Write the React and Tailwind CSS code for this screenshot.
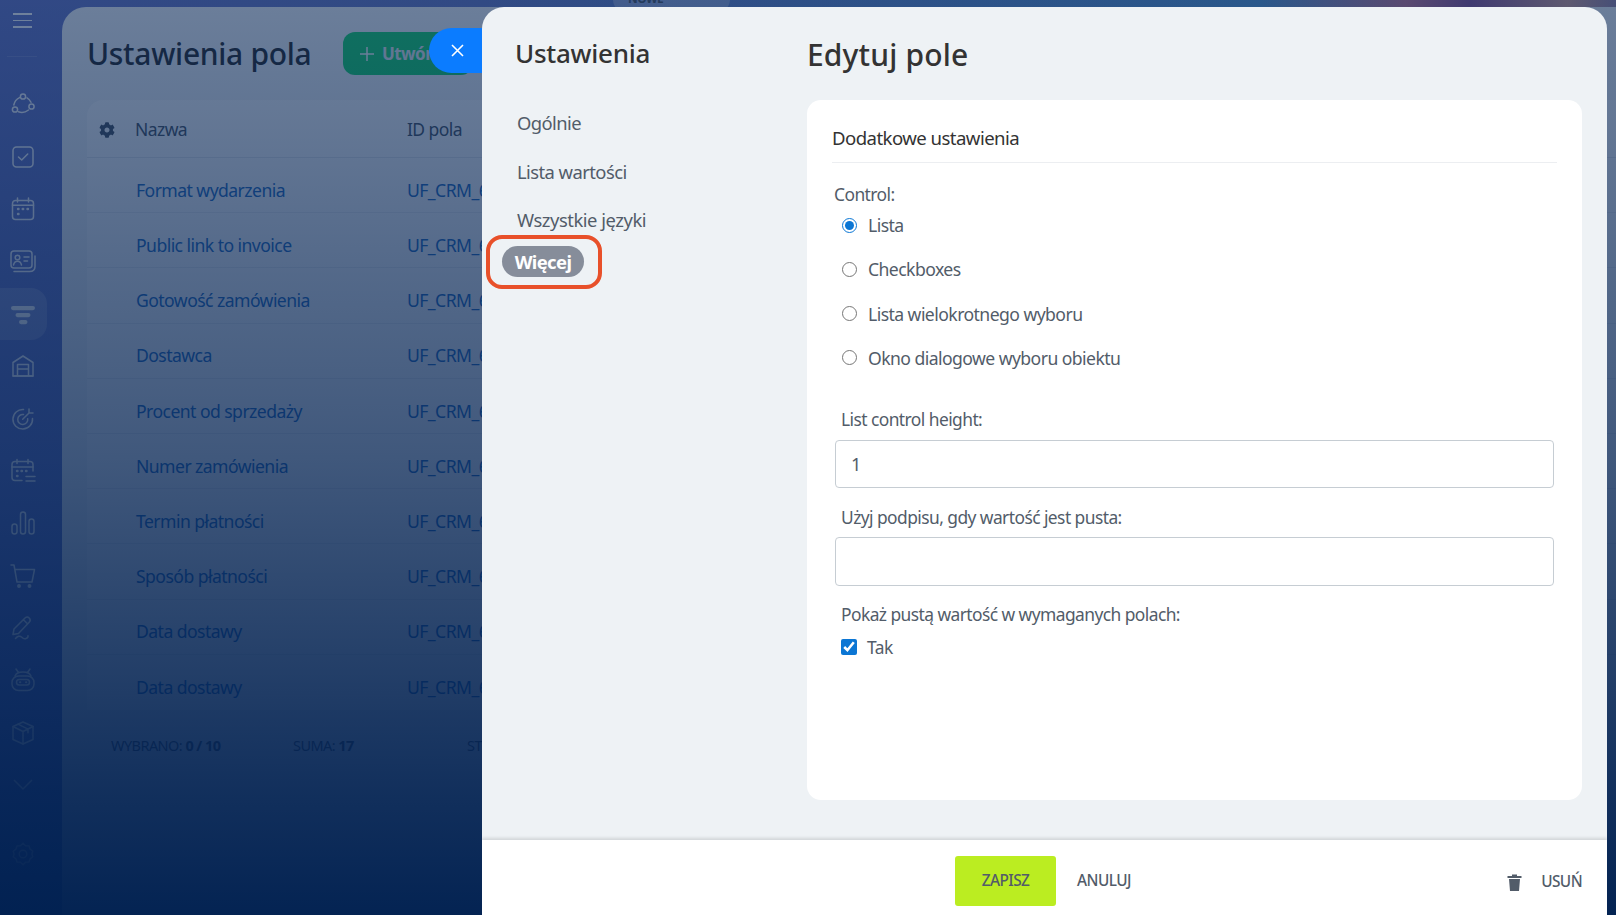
import React from "react";
import { FaCog } from "react-icons/fa";

const I = ({ children }) => (
  <svg width="26" height="26" viewBox="0 0 26 26" fill="none" stroke="white" strokeWidth="1.5" strokeLinecap="round" strokeLinejoin="round">
    {children}
  </svg>
);

const icons = [
  <I key="a"><circle cx="13" cy="5.5" r="2.6" /><circle cx="5" cy="18.5" r="2.6" /><circle cx="21.5" cy="15.5" r="2.6" /><path d="M9.5 6.600C6.400 8.200 4.400 10.800 3.800 14M21 11.200C20.200 9.400 19 8 17 6.800M8.500 20.800c3.500 1.200 6.800.6 10-1.800" /></I>,
  <I key="b"><rect x="3" y="3" width="20" height="20" rx="3.5" /><path d="M8.5 13l3.2 3 6-6" /></I>,
  <I key="c"><rect x="2.5" y="4.5" width="21" height="19" rx="3" /><path d="M7.5 2v4M18.5 2v4M2.5 9.2h21" /><path d="M8 13h.5M12.7 13h.5M17.5 13h.5M8 18h.5" strokeWidth="2.4" /></I>,
  <I key="d"><rect x="1" y="3" width="21" height="17" rx="3" /><path d="M4 23.5h15.5c3 0 5.5-1.5 5.5-5V8" /><circle cx="7.5" cy="9.5" r="2.3" /><path d="M3.5 17c.6-2.6 2-3.7 4-3.7s3.4 1.1 4 3.7M14 9h5M14 13h3.5" /></I>,
  <svg key="e" width="26" height="26" viewBox="0 0 26 26" fill="white"><rect x="1" y="5" width="24" height="4.2" rx="2.1" /><rect x="5.5" y="12" width="15" height="4.2" rx="2.1" /><rect x="9" y="19" width="8.5" height="4.2" rx="2.1" /></svg>,
  <I key="f"><path d="M3 23V9.5L13 3l10 6.5V23z" /><path d="M7.5 23V11.5h11V23M7.5 16h11M3 23h20" /></I>,
  <I key="g"><path d="M13.5 3.5a9.8 9.8 0 1 0 9 9" /><path d="M13.5 8.5a5 5 0 1 0 4.2 4.2" /><path d="M12.7 13.3L19 7M19 3v4h4" /></I>,
  <I key="h"><path d="M12 22.5H5a3 3 0 0 1-3-3V6.5a3 3 0 0 1 3-3h15a3 3 0 0 1 3 3V13" /><path d="M7 1.5v4M18 1.5v4M2 9h21" /><path d="M7 13h.5M11.5 13h.5M16 13h.5M7 18h.5" strokeWidth="2.4" /><path d="M16 18.5h9M16 23h9" /></I>,
  <I key="i"><rect x="2" y="14" width="5" height="10" rx="2.5" /><rect x="10.5" y="2" width="5" height="22" rx="2.5" /><rect x="19" y="9" width="5" height="15" rx="2.5" /></I>,
  <I key="j"><path d="M1 2h3l3 17h15l2.5-12.5H5" /><circle cx="9" cy="23" r="1.2" fill="white" /><circle cx="19.5" cy="23" r="1.2" fill="white" /></I>,
  <I key="k"><path d="M3 19.5l1-5.5L15 3c1.5-1.2 3-1.2 4.2 0s1.4 2.8 0 4.3L8.5 18.5 3 19.5zM13.5 4.8l4.2 4.2" /><path d="M5.5 23.5c2-2.5 4.5-3 6-1.5s2.5 2.2 4 1.7 3-.7 2.5-3" /></I>,
  <I key="l"><rect x="2" y="9" width="22" height="14.5" rx="6.5" /><path d="M5 9c1-2.8 4-4 8-4s7 1.200 8 4M6 2l2.500 3.500M20 2l-2.500 3.500" /><rect x="6.500" y="12.500" width="13" height="5.500" rx="2.750" /><path d="M10 15.200h.3M16 15.200h.3" strokeWidth="2" /></I>,
  <I key="m"><path d="M13 2l10 4.500v13L13 24 3 19.500v-13z" /><path d="M3 6.500l10 5 10-5M13 11.500V24M8 4.200l10 5v3.500" /></I>,
];

const names = [
  "Format wydarzenia",
  "Public link to invoice",
  "Gotowość zamówienia",
  "Dostawca",
  "Procent od sprzedaży",
  "Numer zamówienia",
  "Termin płatności",
  "Sposób płatności",
  "Data dostawy",
  "Data dostawy",
];

const radios = ["Lista", "Checkboxes", "Lista wielokrotnego wyboru", "Okno dialogowe wyboru obiektu"];

export default function App() {
  return (
    <div className="relative w-[1616px] h-[915px] overflow-hidden bg-[linear-gradient(90deg,#6f7cc8_0%,#6f80c6_30%,#5f9fd6_78%,#cd7f99_87%,#8f5b99_91%,#d8a499_97%,#a08aa8_100%)] font-['Noto_Sans',sans-serif] tracking-[-0.035em] text-[#333]">
      <div className="flex h-full">
        <aside className="w-[62px] shrink-0 flex flex-col">
          <div className="h-[56px] pt-[13px]">
            <div className="ml-[13px] w-[19px] flex flex-col gap-[5px]">
              <span className="h-[1.500px] bg-white block" />
              <span className="h-[1.500px] bg-white block" />
              <span className="h-[1.500px] bg-white block" />
            </div>
          </div>
          <div className="ml-[7px] w-[30px] h-px bg-white/15" />
          <nav className="mt-[21px] flex flex-col">
            {icons.map((icon, i) => (
              <div key={i} className={"h-[52.400px] w-[45px] flex items-center justify-center " + (i === 4 ? "w-[47px] pr-[2px] bg-white/20 rounded-r-2xl" : "")}>
                {icon}
              </div>
            ))}
            <div className="h-[52.400px] w-[45px] flex items-center justify-center">
              <svg width="24" height="24" viewBox="0 0 24 24" fill="none" stroke="white" strokeWidth="1.500"><path d="M3 7l9 9 9-9" /></svg>
            </div>
            <div className="mt-[16px] h-[52.400px] w-[45px] flex items-center justify-center">
              <svg width="26" height="26" viewBox="0 0 24 24" fill="none" stroke="white" strokeWidth="1.300"><circle cx="12" cy="12" r="3.500" /><path d="M12 2l2.500 2.500h3l1 3 2.500 2-.8 2.500.8 2.500-2.500 2-1 3h-3L12 22l-2.500-2.500h-3l-1-3-2.500-2 .8-2.500-.8-2.500 2.500-2 1-3h3z" /></svg>
            </div>
          </nav>
        </aside>

        <main className="mt-[7px] flex-1 bg-[#f5f7f9] rounded-tl-[24px] pl-[25px]">
          <div className="h-[93px] flex items-start pt-[25px]">
            <h1 className="w-[256px] text-[30px] leading-[44px] font-medium text-[#333] tracking-[-0.01em]">Ustawienia pola</h1>
            <button className="h-[43px] w-[130px] rounded-[12px] bg-[#23d874] text-[#e8eef0] text-[17px] font-bold flex items-center gap-[7px] pl-[16px]">
              <svg width="16" height="16" viewBox="0 0 16 16" stroke="white" strokeWidth="1.500"><path d="M8 1v14M1 8h14" /></svg>
              Utwórz
            </button>
          </div>
          <div className="bg-white rounded-tl-[16px]">
            <div className="h-[58px] border-b border-[#e8ebef] flex items-center pt-[2px] text-[17.500px] text-[#525c69]">
              <FaCog className="ml-[12px] text-[16px] text-[#525c69]" />
              <span className="ml-[20px] w-[272px]">Nazwa</span>
              <span>ID pola</span>
            </div>
            {names.map((n, i) => (
              <div key={i} className={"h-[55.200px] pt-[10px] flex items-center text-[17.600px] " + (i < 9 ? "border-b border-[#eef0f3]" : "")}>
                <span className="ml-[49px] w-[271px] text-[#2f74c4]">{n}</span>
                <span className="text-[#2f74c4]">UF_CRM_6812345</span>
              </div>
            ))}
          </div>
          <div className="mt-[25px] pl-[24px] flex text-[14.500px] text-[#525c69]">
            <span className="w-[182px]">WYBRANO: <b>0 / 10</b></span>
            <span className="w-[174px]">SUMA: <b>17</b></span>
            <span>STRONY: 1</span>
          </div>
        </main>
      </div>

      <div className="absolute left-[613px] -top-[16px] w-[117px] h-[30px] rounded-full bg-white/30 flex items-end pl-[15px] pb-[6px] text-[12px] font-bold text-[#525c69]">NOWE</div>

      <div className="absolute inset-0 bg-[linear-gradient(180deg,rgba(0,32,80,0.56)_0%,rgba(0,32,80,0.75)_50%,rgba(0,32,80,0.93)_87%,rgba(0,32,80,0.985)_100%)]" />

      <button className="absolute left-[429px] top-[28px] h-[45px] w-[60px] rounded-l-full bg-[#0b7cff] pl-[21px] flex items-center" aria-label="Zamknij">
        <svg width="15" height="15" viewBox="0 0 15 15" stroke="white" strokeWidth="1.600"><path d="M2 2l11 11M13 2L2 13" /></svg>
      </button>

      <section className="absolute left-[482px] top-[7px] w-[1125px] h-[908px] bg-[#eef2f5] rounded-t-[22px] flex flex-col overflow-hidden">
        <div className="flex-1 flex">
          <div className="w-[325px] relative">
            <h2 className="ml-[33px] mt-[26px] text-[26px] leading-[40px] font-medium text-[#333] tracking-[-0.01em]">Ustawienia</h2>
            <ul className="mt-[26px] text-[18.400px] leading-[24px] text-[#525c69]">
              <li className="ml-[35px] h-[48.400px] flex items-center">Ogólnie</li>
              <li className="ml-[35px] h-[48.400px] flex items-center">Lista wartości</li>
              <li className="ml-[35px] h-[48.400px] flex items-center tracking-[-0.025em]">Wszystkie języki</li>
              <li className="ml-[20px] w-[82px] h-[31px] rounded-full bg-[#868d9a] text-white font-bold flex items-center justify-center mt-[2px]">Więcej</li>
            </ul>
            <div className="absolute left-[4px] top-[228px] w-[116px] h-[54px] rounded-[16px] border-4 border-[#e8502a]" />
          </div>
          <div className="flex-1">
            <h1 className="mt-[26px] h-[44px] text-[30px] leading-[44px] font-medium text-[#333] tracking-[0.005em]">Edytuj pole</h1>
            <div className="mt-[23px] w-[775px] h-[700px] bg-white rounded-[14px] px-[25px] pt-[26px] text-[17.600px] text-[#525c69]">
              <h3 className="h-[37px] leading-[24px] border-b border-[#eceef1] text-[#333] text-[18.600px]">Dodatkowe ustawienia</h3>
              <div className="mt-[19px] ml-[2px] h-[24px] leading-[24px] text-[17.400px]">Control:</div>
              <div className="mt-[7px] ml-[10px] flex flex-col gap-[20.300px]">
                {radios.map((r, i) => (
                  <label key={r} className="h-[24px] flex items-center gap-[11px] leading-[24px]">
                    <input type="radio" name="control" defaultChecked={i === 0} className="w-[15px] h-[15px] m-0 accent-[#0b76d4]" />
                    {r}
                  </label>
                ))}
              </div>
              <div className="mt-[37px] ml-[9px] h-[24px] leading-[24px] text-[17.400px]">List control height:</div>
              <input defaultValue="1" className="mt-[9px] ml-[3px] block w-[719px] h-[48px] border border-[#c6cdd3] rounded-[4px] px-[15px] text-[18px] text-[#525c69] outline-none" />
              <div className="mt-[17px] ml-[9px] h-[24px] leading-[24px] text-[17.400px]">Użyj podpisu, gdy wartość jest pusta:</div>
              <input className="mt-[8px] ml-[3px] block w-[719px] h-[49px] border border-[#c6cdd3] rounded-[4px] px-[15px] outline-none" />
              <div className="mt-[16px] ml-[9px] h-[24px] leading-[24px] text-[17.400px]">Pokaż pustą wartość w wymaganych polach:</div>
              <label className="mt-[9px] ml-[9px] h-[24px] flex items-center gap-[10px] text-[17.400px]">
                <input type="checkbox" defaultChecked className="w-[16px] h-[16px] m-0 accent-[#0b76d4]" />
                Tak
              </label>
            </div>
          </div>
        </div>
        <footer className="h-[75px] shrink-0 bg-white shadow-[0_-2px_3px_rgba(0,0,0,0.12)] flex items-start pt-[16px] pl-[473px] pr-[25px] text-[15.400px] text-[#525c69] relative">
          <button className="w-[101px] h-[50px] rounded-[3px] bg-[#bbed21] font-medium text-[#535c69]">ZAPISZ</button>
          <button className="ml-[21px] h-[50px] font-medium">ANULUJ</button>
          <button className="ml-auto h-[52px] flex items-center gap-[19px] font-medium">
            <svg width="15" height="18" viewBox="0 0 15 18" fill="#525c69"><path d="M0.500 3h14v2H0.500zM5 1.500h5V3H5zM2 6h11l-1 12H3z" /></svg>
            USUŃ
          </button>
        </footer>
      </section>
    </div>
  );
}
